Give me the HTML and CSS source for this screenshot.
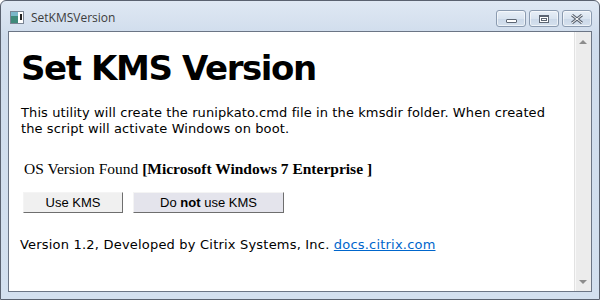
FILE: index.html
```html
<!DOCTYPE html>
<html lang="en">
<head>
    <meta charset="UTF-8">
    <title>SetKMSVersion</title>
    <link rel="stylesheet" href="styles.css">
</head>
<body>
    <div class="window">
        <div class="titlebar">
            <svg class="app-icon" width="14" height="13" viewBox="0 0 14 13">
                <rect x="0.5" y="0.5" width="13" height="12" fill="#fff" stroke="#7a8594"/>
                <rect x="1" y="1" width="7" height="11" fill="#3f8a7a"/>
                <rect x="1" y="1" width="7" height="4" fill="#7bb7c9"/>
                <rect x="10" y="3" width="2" height="6" fill="#222"/>
            </svg>
            <span class="title">SetKMSVersion</span>
            <div class="controls">
                <div class="ctl"><span class="min-glyph"></span></div>
                <div class="ctl"><span class="max-glyph"></span></div>
                <div class="ctl">
                    <svg width="14" height="10" viewBox="0 0 14 10">
                        <path d="M2 1 L12 9 M12 1 L2 9" stroke="#5d6673" stroke-width="3"/>
                        <path d="M2 1 L12 9 M12 1 L2 9" stroke="#fff" stroke-width="1"/>
                    </svg>
                </div>
            </div>
        </div>
        <div class="client">
            <div class="content">
                <h1>Set KMS Version</h1>
                <p class="intro">This utility will create the runipkato.cmd file in the kmsdir folder. When created the script will activate Windows on boot.</p>
                <div class="os-line">OS Version Found <b>[Microsoft Windows 7 Enterprise ]</b></div>
                <div class="actions">
                    <button class="btn btn-use">Use KMS</button>
                    <button class="btn btn-not">Do <b>not</b> use KMS</button>
                </div>
                <p class="footer">Version 1.2, Developed by Citrix Systems, Inc. <a href="#">docs.citrix.com</a></p>
            </div>
            <div class="scrollbar">
                <span class="arrow up"></span>
                <span class="arrow down"></span>
            </div>
        </div>
    </div>
</body>
</html>
```

FILE: styles.css
```css
* {
    margin: 0;
    padding: 0;
    box-sizing: border-box;
}
body {
    width: 600px;
    height: 300px;
    overflow: hidden;
    background: #fff;
}
.window {
    width: 600px;
    height: 300px;
    border: 1px solid #5a6270;
    border-radius: 6px 6px 0 0;
    background: linear-gradient(#dfe8f3 0%, #cfdcec 12%, #d3e0ef 100%);
    display: flex;
    flex-direction: column;
    padding: 0 7px 7px 7px;
}
.titlebar {
    height: 30px;
    display: flex;
    align-items: center;
    padding-left: 2px;
}
.app-icon {
    margin-top: 2px;
}
.title {
    font-family: "Open Sans", "Noto Sans", sans-serif;
    font-size: 12px;
    color: #3c3c3c;
    margin-left: 7px;
    margin-top: 3px;
}
.controls {
    margin-left: auto;
    display: flex;
    gap: 3px;
    align-self: flex-start;
    margin-top: 9px;
}
.ctl {
    width: 30px;
    height: 17px;
    border: 1px solid #8b9bb0;
    border-radius: 3px;
    background: linear-gradient(#e8eff7 0%, #d9e4f0 50%, #cbd8e8 51%, #d5e1ee 100%);
    box-shadow: inset 0 0 0 1px rgba(255,255,255,0.6);
    display: flex;
    align-items: center;
    justify-content: center;
}
.min-glyph {
    width: 11px;
    height: 4px;
    border: 1px solid #5d6673;
    background: #fff;
    border-radius: 1px;
    margin-top: 5px;
}
.max-glyph {
    width: 10px;
    height: 8px;
    border: 1px solid #5d6673;
    border-top-width: 2px;
    background: #fff;
    box-shadow: inset 0 0 0 1px #fff, inset 0 0 0 2px #5d6673;
}
.client {
    flex: 1;
    border: 1px solid #6b7585;
    background: #fff;
    display: flex;
}
.content {
    flex: 1;
    padding-left: 11px;
    font-family: "DejaVu Sans", Verdana, sans-serif;
    color: #000;
}
h1 {
    font-family: "DejaVu Sans", Verdana, sans-serif;
    font-size: 34px;
    font-weight: bold;
    letter-spacing: -1.4px;
    line-height: 42px;
    margin-top: 15px;
    padding-left: 1px;
}
.intro {
    font-size: 13px;
    line-height: 16px;
    letter-spacing: 0.1px;
    margin-top: 16px;
    padding-left: 1px;
    padding-right: 6px;
}
.os-line {
    font-family: "Liberation Serif", "Times New Roman", serif;
    font-size: 15.5px;
    line-height: 18px;
    margin-top: 23px;
    padding-left: 4px;
}
.actions {
    display: flex;
    gap: 10px;
    margin-top: 14px;
    padding-left: 3px;
}
.btn {
    font-family: "Liberation Sans", Arial, sans-serif;
    font-size: 13px;
    height: 21px;
    border: 1px solid;
    border-color: #f4f4f4 #6e6e6e #6e6e6e #f4f4f4;
    color: #000;
}
.btn-use {
    width: 100px;
    background: #f0f0f0;
}
.btn-not {
    width: 151px;
    background: #e4e4ec;
}
.footer {
    font-size: 13px;
    line-height: 16px;
    letter-spacing: 0.2px;
    margin-top: 24px;
}
.footer a {
    color: #0066cc;
}
.scrollbar {
    width: 17px;
    background: #ececec;
    border-left: 1px solid #e2e2e2;
    box-shadow: inset 1px 0 0 #f8f8f8;
    display: flex;
    flex-direction: column;
    justify-content: space-between;
    align-items: center;
    padding: 8px 0 7px;
}
.arrow {
    width: 0;
    height: 0;
    border-left: 4px solid transparent;
    border-right: 4px solid transparent;
}
.arrow.up {
    border-bottom: 4px solid #8c8c8c;
}
.arrow.down {
    border-top: 4px solid #8c8c8c;
}
```
